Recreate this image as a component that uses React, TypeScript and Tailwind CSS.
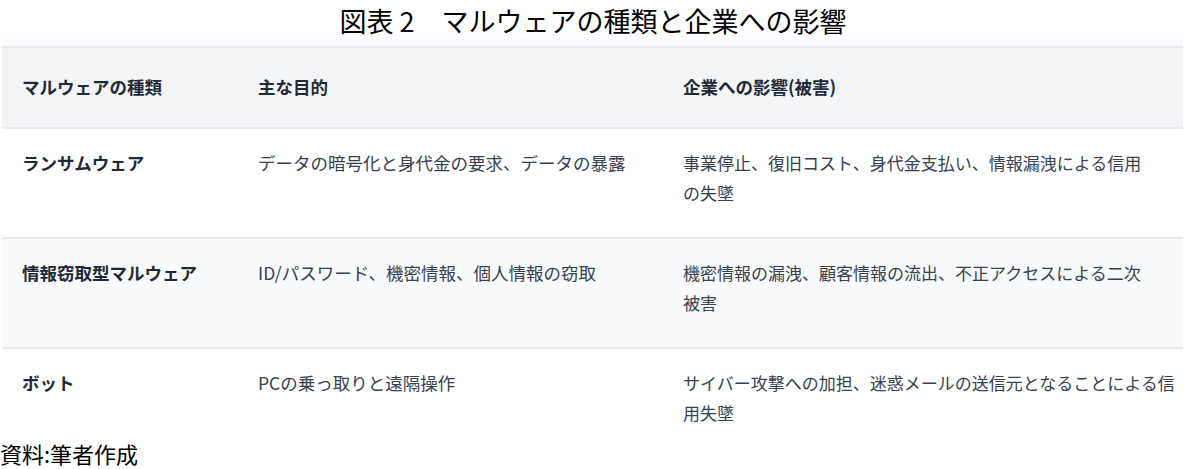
import React from "react";

const rows = [
  {
    type: "ランサムウェア",
    purpose: "データの暗号化と身代金の要求、データの暴露",
    impact: ["事業停止、復旧コスト、身代金支払い、情報漏洩による信用", "の失墜"],
    bg: "bg-white",
    last: false,
  },
  {
    type: "情報窃取型マルウェア",
    purpose: "ID/パスワード、機密情報、個人情報の窃取",
    impact: ["機密情報の漏洩、顧客情報の流出、不正アクセスによる二次", "被害"],
    bg: "bg-[#f9fafb]",
    last: false,
  },
  {
    type: "ボット",
    purpose: "PCの乗っ取りと遠隔操作",
    impact: ["サイバー攻撃への加担、迷惑メールの送信元となることによる信", "用失墜"],
    bg: "bg-white",
    last: true,
  },
];

export default function App() {
  return (
    <div
      className="w-[1186px] h-[469px] bg-white overflow-hidden"
      style={{ fontFamily: '"Noto Sans CJK JP", "Noto Sans", sans-serif' }}
    >
      <div className="h-[39px] flex items-center justify-center text-[27px] leading-none text-black pt-[2px]">
        図表 2　マルウェアの種類と企業への影響
      </div>
      <div className="mx-[2px] w-[1181px]">
        <div className="h-[7px] bg-[#fafbfc]" />
        <table className="w-full table-fixed border-collapse">
          <colgroup>
            <col className="w-[240px]" />
            <col className="w-[425px]" />
            <col />
          </colgroup>
          <thead>
            <tr className="bg-[#f3f4f6] border-y-2 border-[#e9ebee]">
              <th className="h-[81px] px-5 text-left align-middle text-[17.5px] font-semibold text-[#1f2937]">
                マルウェアの種類
              </th>
              <th className="px-4 text-left align-middle text-[17.5px] font-semibold text-[#1f2937]">
                主な目的
              </th>
              <th className="px-4 text-left align-middle text-[17.5px] font-semibold text-[#1f2937]">
                企業への影響(被害)
              </th>
            </tr>
          </thead>
          <tbody>
            {rows.map((r, i) => (
              <tr
                key={i}
                className={`${r.bg} ${r.last ? "" : "border-b-2 border-[#e9ebee]"}`}
              >
                <td
                  className={`px-5 pt-[19px] ${r.last ? "pb-[11px]" : "pb-[29px]"} align-top text-[17.5px] leading-[30px] font-semibold text-[#1f2937]`}
                >
                  {r.type}
                </td>
                <td
                  className={`px-4 pt-[19px] ${r.last ? "pb-[11px]" : "pb-[29px]"} align-top text-[17.5px] leading-[30px] text-[#374151]`}
                >
                  {r.purpose}
                </td>
                <td
                  className={`px-4 pt-[19px] ${r.last ? "pb-[11px]" : "pb-[29px]"} align-top text-[17px] leading-[30px] text-[#374151] whitespace-nowrap`}
                >
                  {r.impact[0]}
                  <br />
                  {r.impact[1]}
                </td>
              </tr>
            ))}
          </tbody>
        </table>
      </div>
      <div className="text-[22px] leading-[28px] text-black">資料:筆者作成</div>
    </div>
  );
}
